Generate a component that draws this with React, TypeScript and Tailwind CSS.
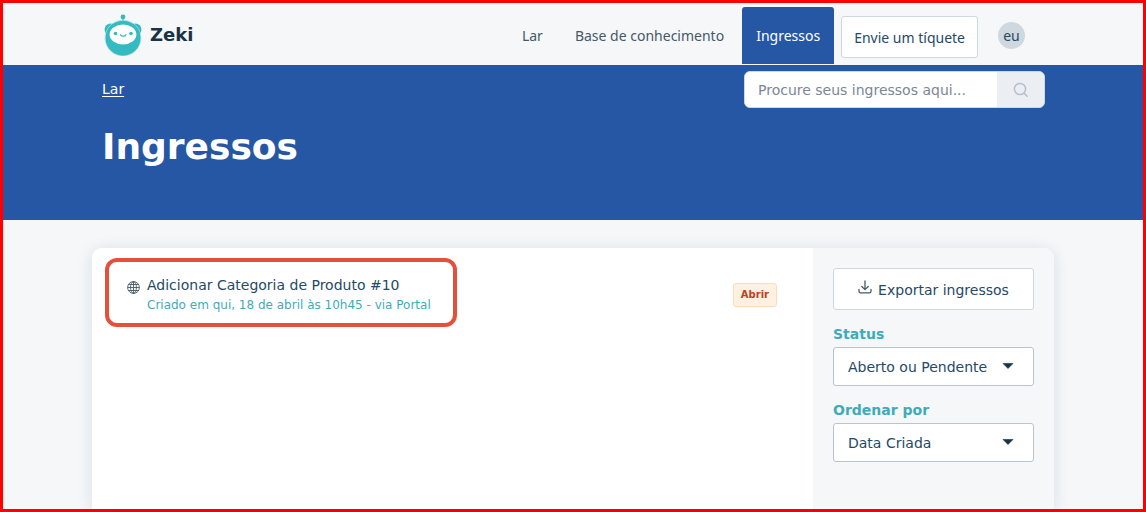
import React from "react";

function RobotLogo() {
  return (
    <svg width="38" height="42" viewBox="0 0 38 42" aria-hidden="true">
      <circle cx="19" cy="3" r="2.4" fill="#36bac1" />
      <path d="M19 4v5" stroke="#36bac1" strokeWidth="1.2" />
      <circle cx="6.500" cy="15.500" r="5.900" fill="#36bac1" />
      <circle cx="31.500" cy="15.500" r="5.900" fill="#36bac1" />
      <circle cx="19" cy="24" r="17.900" fill="none" stroke="#a9dfe2" strokeWidth="0.8" />
      <circle cx="19" cy="24.200" r="17.500" fill="#36bac1" />
      <ellipse cx="19" cy="20.500" rx="13.400" ry="9.900" fill="#ffffff" />
      <circle cx="11.500" cy="19.500" r="1.800" fill="#36bac1" />
      <circle cx="27" cy="19.500" r="1.800" fill="#36bac1" />
      <path
        d="M16.500 20.700c.8 2 4.700 2 5.500 0"
        fill="none"
        stroke="#36bac1"
        strokeWidth="1.200"
        strokeLinecap="round"
      />
    </svg>
  );
}

function GlobeIcon() {
  return (
    <svg className="shrink-0" width="13" height="13" viewBox="0 0 13 13" fill="none" stroke="#475867" strokeWidth="0.9" aria-hidden="true">
      <circle cx="6.500" cy="6.500" r="5.900" />
      <ellipse cx="6.500" cy="6.500" rx="2.900" ry="5.900" />
      <path d="M6.500 .6v11.800M.6 6.500h11.800M1.500 3.500h10M1.500 9.500h10" />
    </svg>
  );
}

function DownloadIcon() {
  return (
    <svg width="14" height="14" viewBox="0 0 14 14" fill="none" stroke="#475867" strokeWidth="1.300" strokeLinecap="round" strokeLinejoin="round" aria-hidden="true">
      <path d="M7 1v8.500M3.800 6.500 7 9.600l3.200-3.100M1 9.500v1.800c0 1 .6 1.600 1.600 1.600h8.800c1 0 1.600-.6 1.600-1.600V9.500" />
    </svg>
  );
}

function SearchIcon() {
  return (
    <svg width="16" height="16" viewBox="0 0 16 16" fill="none" stroke="#b4c0ca" strokeWidth="1.500" strokeLinecap="round" aria-hidden="true">
      <circle cx="7" cy="7" r="5.600" />
      <path d="m11.200 11.200 3 3" />
    </svg>
  );
}

function Filter({ id, label, options }: { id: string; label: string; options: string[] }) {
  return (
    <div className="flex flex-col gap-[3px]">
      <label htmlFor={id} className="text-sm leading-5 font-bold text-[#3fabb9]">
        {label}
      </label>
      <div className="relative">
        <select
          id={id}
          className="h-[39px] w-full appearance-none rounded-[3px] border border-[#b9c4ce] bg-white pr-8 pl-[14px] text-sm text-[#264966]"
        >
          {options.map((o) => (
            <option key={o}>{o}</option>
          ))}
        </select>
        <svg className="pointer-events-none absolute top-4 right-5" width="12" height="6" viewBox="0 0 12 6" aria-hidden="true">
          <path d="M1 .5h10L6 5.500Z" fill="#183247" stroke="#183247" strokeWidth=".6" strokeLinejoin="round" />
        </svg>
      </div>
    </div>
  );
}

export default function App() {
  return (
    <div className="flex min-h-screen flex-col border-[3px] border-[#ff0000] bg-[#f5f7f9] font-['DejaVu_Sans',Verdana,sans-serif] text-sm text-[#264966]">
      <header>
        <div className="mx-auto flex h-[62px] w-full max-w-[962px] items-center justify-between pr-[29px] pl-3">
          <a href="#inicio" className="flex items-center gap-2 pt-[2px] text-lg font-bold text-[#183247]">
            <RobotLogo />
            <span className="leading-6">Zeki</span>
          </a>
          <nav className="flex h-full items-center font-['Noto_Sans',Verdana,sans-serif]">
            <a href="#lar" className="px-4 pt-1 text-[#475867]">
              Lar
            </a>
            <a href="#base" className="pt-1 pr-[18px] pl-4 text-[#475867]">
              Base de conhecimento
            </a>
            <a href="#ingressos" className="mt-1 mb-px flex items-center self-stretch rounded-t-[3px] bg-[#2557a4] px-[14px] text-white">
              Ingressos
            </a>
            <button type="button" className="mt-[6px] ml-[7px] h-[42px] rounded-[3px] border border-[#cfd7df] bg-white px-3 pt-px text-[#264966]">
              Envie um tíquete
            </button>
            <button type="button" className="mt-[3px] ml-5 flex size-[27px] items-center justify-center rounded-full bg-[#cfd7df] text-[#264966]">
              eu
            </button>
          </nav>
        </div>
      </header>

      <section className="bg-[#2557a4]">
        <div className="mx-auto flex min-h-[155px] w-full max-w-[962px] items-start justify-between pt-[6px] pr-[9px] pl-[10px] text-white">
          <div>
            <a href="#lar" className="mt-2 block leading-5 underline underline-offset-2">
              Lar
            </a>
            <h1 className="mt-6 text-4xl leading-[48px] font-bold">Ingressos</h1>
          </div>
          <form className="flex h-[37px] w-[301px] overflow-hidden rounded-md border border-[#cfd7df] bg-white" onSubmit={(e) => e.preventDefault()}>
            <input
              type="search"
              aria-label="Procure seus ingressos aqui"
              placeholder="Procure seus ingressos aqui..."
              className="min-w-0 flex-1 bg-white pl-[13px] text-[#264966] outline-none placeholder:text-[#7b8794]"
            />
            <button type="submit" aria-label="Procurar" className="flex w-[47px] items-center justify-center bg-[#ebeef2]">
              <SearchIcon />
            </button>
          </form>
        </div>
      </section>

      <main className="mx-auto mt-7 flex w-full max-w-[962px] flex-1 overflow-hidden rounded-t-[10px] shadow-[0_2px_16px_rgba(24,50,71,0.12)]">
        <section className="flex flex-1 items-start justify-between bg-white pt-[10px] pr-9 pl-[13px]">
          <div className="flex h-[69px] w-[352px] items-start gap-[7px] rounded-xl border-4 border-[#e5503c] pt-[13px] pl-[18px]">
            <span className="pt-[6px]">
              <GlobeIcon />
            </span>
            <div className="whitespace-nowrap">
              <a href="#ticket-10" className="block leading-5 text-[#264966]">
                Adicionar Categoria de Produto #10
              </a>
              <p className="text-xs leading-5 text-[#3fabb9]">Criado em qui, 18 de abril às 10h45 - via Portal</p>
            </div>
          </div>
          <span className="mt-[25px] rounded-[3px] border border-[#fedcb8] bg-[#fef1e1] px-[7px] text-[10px] leading-[22px] font-bold text-[#c0401f]">
            Abrir
          </span>
        </section>
        <aside className="flex w-[241px] flex-col gap-[14px] bg-[#f5f7f9] pt-5 pr-5 pl-5">
          <button type="button" className="flex h-[42px] items-center justify-center gap-[6px] rounded-[3px] border border-[#cfd7df] bg-white text-[#264966]">
            <span className="pb-1">
              <DownloadIcon />
            </span>
            <span className="pt-px">Exportar ingressos</span>
          </button>
          <Filter id="status" label="Status" options={["Aberto ou Pendente", "Resolvido ou Fechado"]} />
          <Filter id="ordenar" label="Ordenar por" options={["Data Criada", "Última modificação"]} />
        </aside>
      </main>
    </div>
  );
}
